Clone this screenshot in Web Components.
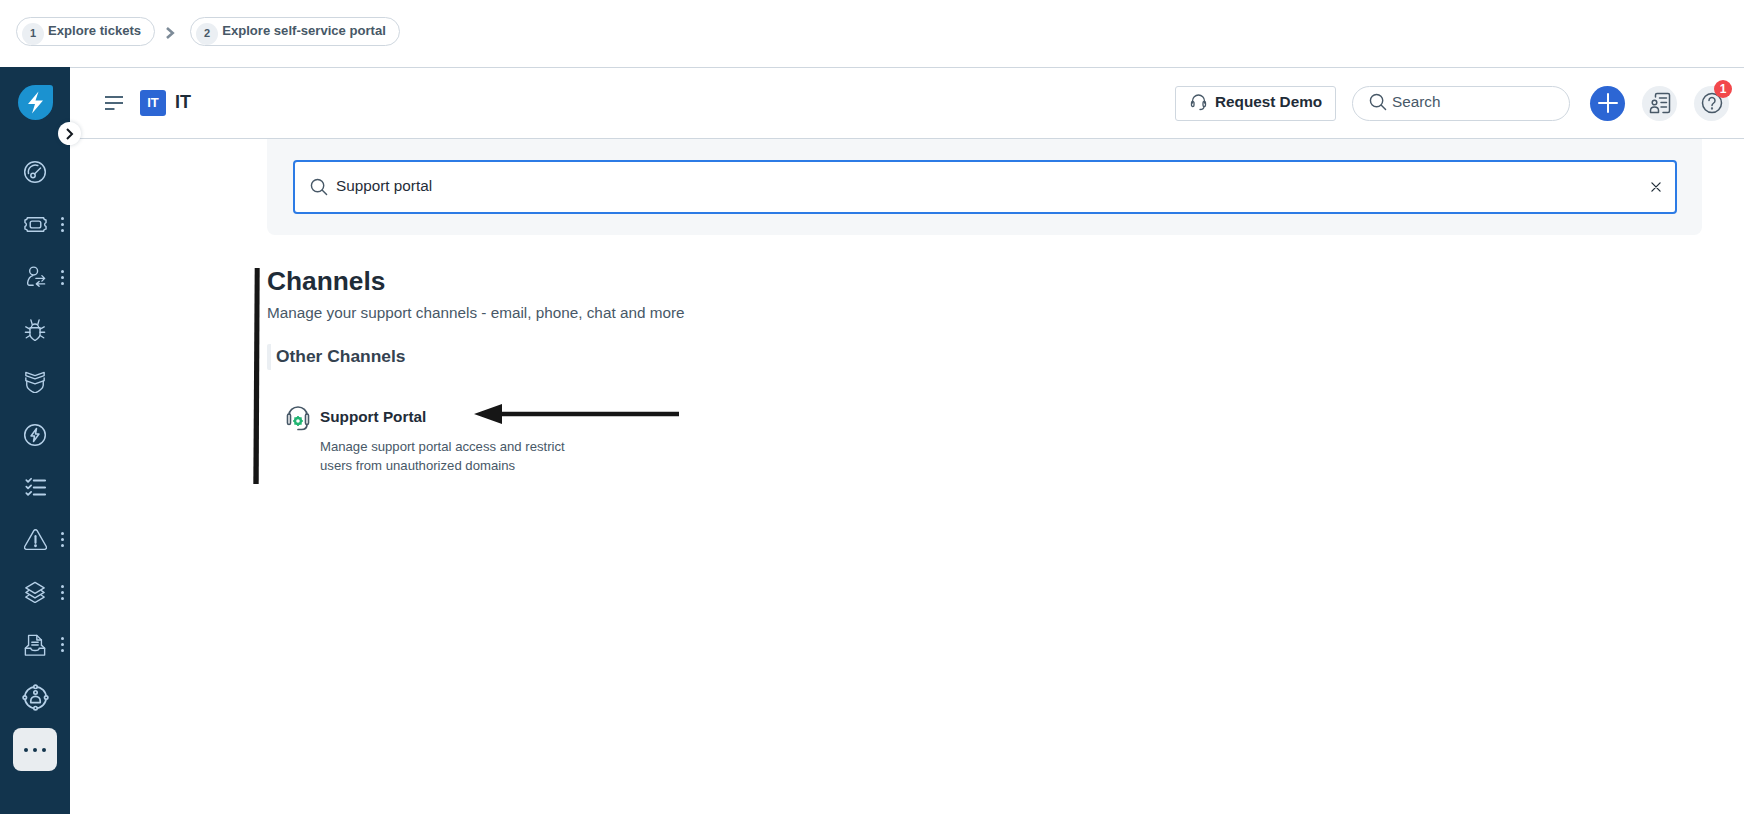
<!DOCTYPE html>
<html lang="en"><head><meta charset="utf-8"><title>IT</title>
<style>html,body{margin:0;height:100%;background:#fff;overflow:hidden;font-family:"Liberation Sans",Arial,sans-serif}</style></head>
<body>
<app-shell>
  <tour-steps slot="top">
    <tour-step n="1">Explore tickets</tour-step>
    <tour-step n="2">Explore self-service portal</tour-step>
  </tour-steps>
  <side-nav slot="side"></side-nav>
  <top-bar slot="bar"></top-bar>
  <search-panel slot="main">Support portal</search-panel>
  <channels-section slot="main"></channels-section>
</app-shell>
<script>
const def=(name,render)=>customElements.define(name,class extends HTMLElement{
  constructor(){super();this.attachShadow({mode:'open'});}
  connectedCallback(){this.shadowRoot.innerHTML=render(this);}
});
const F='"Liberation Sans",Arial,sans-serif';
const ICONS={
 gauge:[24,'<circle cx="12" cy="12" r="10.300"/><path d="M5.500 13.500a7 7 0 0 1 9.300-8"/><path d="M17.500 8 11.500 14"/><circle cx="10" cy="15.500" r="2.200"/>'],
 ticket:[23,'<path d="M3.500 5H20.500c0 1.200 1 2.200 2.500 2.200V10c-1 .3-1.500 1-1.500 2s.5 1.700 1.500 2v2.800c-1.500 0-2.500 1-2.500 2.200H3.500c0-1.200-1-2.200-2.500-2.200V14c1-.3 1.500-1 1.500-2s-.5-1.700-1.500-2V7.200C2.500 7.200 3.500 6.200 3.500 5z"/><rect x="6.500" y="8.500" width="11" height="7" rx="2"/>'],
 transfer:[22,'<circle cx="10.500" cy="5.500" r="4.300"/><path d="M9.500 10.500c-3 1-5 4.500-5.500 7.500-.2 2 .6 3 2 3h4"/><path d="M13 13.500h9.500M19.500 10.500l3 3-3 3"/><path d="M22.500 19.500h-9M16.500 16.800l-3 2.700 3 2.700"/>'],
 bug:[22,'<path d="M6.500 9.500h11v7.500c0 2.500-3 5-5.500 6.500-2.500-1.500-5.500-4-5.500-6.500z"/><path d="M8 9.500c0-2.200 1.800-4 4-4s4 1.800 4 4"/><path d="M7.500 1l1.500 5M16.500 1L15 6M6.500 11 2 8.500M6.500 14.500H1.500M6.500 18 2.500 20.500M17.500 11 22 8.500M17.500 14.500h5M17.500 18l4 2.500"/>'],
 shield:[22,'<path d="M2 1.500 12 5 22 1.500V5L12 8.500 2 5z"/><path d="M2 7.500v3L12 14l10-3.500v-3"/><path d="M3 11v4.500c0 3.500 5 7 9 8.500 4-1.500 9-5 9-8.500V11"/>'],
 bolt:[24,'<circle cx="12" cy="12" r="10.300"/><path d="M13.500 5.500 8 13h3.500l-1 5.500L16 11h-3.500z"/>'],
 list:[21,'<path d="M1.500 3.500 3.500 5.500 7 2M1.500 11l2 2L7 9.500M1.500 18.500l2 2L7 17" stroke-width="2"/><path d="M10 4h13M10 12h13M10 20h13" stroke-width="2.200"/>'],
 warn:[23,'<path d="M10.300 2.800a2 2 0 0 1 3.400 0l9.500 16.500a2 2 0 0 1-1.700 3H2.500a2 2 0 0 1-1.700-3z"/><path d="M12 8.500v7" stroke-width="2.200"/><circle cx="12" cy="18.500" r=".8" stroke-width="1.400"/>'],
 layers:[22,'<path d="M12 1.500 22 7.500l-10 6-10-6z"/><path d="M5 10.500 2 12.500l10 6 10-6-3-2"/><path d="M5 15.500 2 17.500l10 6 10-6-3-2"/>'],
 doc:[22,'<path d="M5 12.500V1.500h9L19 6.500v6"/><path d="M14 1.500v5h5M8.500 9h7M8.500 12h7"/><path d="M4.500 12.500 1.500 15.500v7.500h21v-7.500l-3-3"/><path d="M1.500 15.500h6c0 1.500 1.500 2.500 4.500 2.500s4.500-1 4.500-2.500h6"/>'],
 orbit:[27,'<circle cx="12" cy="12" r="9.500"/><circle cx="12" cy="2.500" r="1.500" fill="#12344d"/><circle cx="12" cy="21.500" r="1.500" fill="#12344d"/><circle cx="2.500" cy="12" r="1.500" fill="#12344d"/><circle cx="21.500" cy="12" r="1.500" fill="#12344d"/><circle cx="12" cy="7.500" r="1.500"/><path d="M7.800 16.500v-1.500c0-2.300 1.800-4 4.200-4s4.200 1.700 4.200 4v1.500z"/>']
};
const ROWS=[['gauge',0],['ticket',1],['transfer',1],['bug',0],['shield',0],['bolt',0],['list',0],['warn',1],['layers',1],['doc',1],['orbit',0]];

def('app-shell',()=>`<style>:host{display:flex;flex-direction:column;height:814px;width:1744px;overflow:hidden}
.row{display:flex;flex:1;min-height:0}.right{flex:1;display:flex;flex-direction:column;min-width:0}
.main{flex:1;padding:0 42px 0 197px}</style>
<slot name="top"></slot><div class="row"><slot name="side"></slot><div class="right"><slot name="bar"></slot><div class="main"><slot name="main"></slot></div></div></div>`);

def('tour-steps',()=>`<style>:host{display:flex;align-items:flex-start;height:67px;padding:17px 0 0 16px;box-sizing:border-box;background:#fff}</style><slot></slot>`);

def('tour-step',el=>{
 const n=el.getAttribute('n');
 const chev=n==='2'?`<svg class="chev" width="12" height="12" viewBox="0 0 12 12" fill="none"><path d="M2 1 7.700 6 2 11" stroke="#7d8b98" stroke-width="2.600"/></svg>`:'';
 return `<style>:host{display:flex;align-items:flex-start}
 .chev{margin:10px 13px 0 10px}
 .pill{display:flex;align-items:flex-start;height:29px;box-sizing:border-box;border:1px solid #cfd7df;border-radius:15px;padding:5px 13px 0 5px;gap:4px;font:700 13.100px/15px ${F};color:#475867;white-space:nowrap}
 .n{width:22px;height:22px;box-sizing:border-box;padding-bottom:2px;border-radius:50%;background:#ebeff3;display:flex;align-items:center;justify-content:center;font-size:11px}
 .t{margin-top:0}</style>${chev}<div class="pill"><span class="n">${n}</span><span class="t"><slot></slot></span></div>`;
});

def('nav-item',el=>{
 const more=el.hasAttribute('more');
 const [sz,body]=ICONS[el.getAttribute('icon')];
 return `<style>:host{display:block;position:relative;height:52.500px;flex:none}
 svg{position:absolute;left:${35-sz/2}px;top:${26-sz/2}px;width:${sz}px;height:${sz}px;fill:none;stroke:#b5d0e8;stroke-width:1.500;stroke-linecap:round;stroke-linejoin:round}
 .d{position:absolute;left:61px;top:18.500px;display:flex;flex-direction:column;gap:3px}
 .d i{display:block;width:3px;height:3px;border-radius:50%;background:#b5d0e8}</style>
 <svg viewBox="0 0 24 24">${body}</svg>${more?'<span class="d"><i></i><i></i><i></i></span>':''}`;
});

def('side-nav',()=>`<style>:host{display:flex;flex-direction:column;width:70px;flex:none;background:#12344d;position:relative;box-sizing:border-box;padding-top:79px}
.logo{position:absolute;left:18px;top:18px}
.toggle{position:absolute;left:58px;top:55px;width:23px;height:23px;border-radius:50%;background:#fff;box-shadow:0 0 4px rgba(18,52,77,.2);display:flex;align-items:center;justify-content:center;z-index:2}
.more{margin:4.500px 0 0 13px;width:44px;height:43px;border-radius:8px;background:#e9edf0;display:flex;align-items:center;justify-content:center;gap:5px}
.more i{width:4px;height:4px;border-radius:50%;background:#12344d}</style>
<svg class="logo" width="35" height="35" viewBox="0 0 35 35"><path d="M17.500 0H32a3 3 0 0 1 3 3v14.500A17.500 17.500 0 1 1 17.500 0z" fill="#1b92d0"/><path d="M20.500 6.500 10 19h7l-3 9.500L25 15.500h-7.500z" fill="#fff"/></svg>
<span class="toggle"><svg width="10" height="12" viewBox="0 0 10 12" fill="none"><path d="M2 1 7 6l-5 5" stroke="#12181f" stroke-width="2"/></svg></span>
${ROWS.map(([i,m])=>`<nav-item icon="${i}"${m?' more':''}></nav-item>`).join('')}
<div class="more"><i></i><i></i><i></i></div>`);

def('top-bar',()=>`<style>:host{display:flex;align-items:center;height:72px;box-sizing:border-box;border-top:1px solid #cfd7df;border-bottom:1px solid #cfd7df;background:#fff;padding:0 15px 0 35px;color:#12181f;font-family:${F}}
.ham{margin-right:17px}
.badge{width:26px;height:26px;border-radius:3px;background:#2c66d4;color:#fff;font:700 13px/26px ${F};text-align:center;margin-right:9px}
.t{font-weight:700;font-size:18px;color:#1f2c38;flex:1;padding-bottom:1px}
.demo{display:flex;align-items:center;gap:8px;box-sizing:border-box;width:161px;height:35px;border:1px solid #cfd7df;border-radius:3px;padding:0 0 2px 14px;font:700 15.300px ${F};color:#1f2c38;margin-right:16px}
.search{display:flex;align-items:center;gap:5px;box-sizing:border-box;width:218px;height:35px;border:1px solid #cfd7df;border-radius:18px;padding:0 0 2px 16px;font-size:15.300px;color:#475867;margin-right:20px}
.round{width:35px;height:35px;border-radius:50%;display:flex;align-items:center;justify-content:center;background:#ebeff3;position:relative;flex:none}
.plus{background:#2c66d4;margin-right:17px}.c{margin-right:17px}
.dot{position:absolute;right:-3px;top:-6px;width:18px;height:18px;border-radius:50%;background:#f2484b;color:#fff;font:700 12px/18px ${F};text-align:center}
svg{fill:none;stroke-linecap:round;stroke-linejoin:round;flex:none}</style>
<svg class="ham" width="18" height="14" viewBox="0 0 18 14" stroke="#12344d" stroke-width="1.400"><path d="M0 1h18M0 7h18M0 13h9"/></svg>
<span class="badge">IT</span><span class="t">IT</span>
<div class="demo"><svg width="17" height="17" viewBox="0 0 17 17" stroke="#475867" stroke-width="1.300"><path d="M2.500 9V7a6 6 0 0 1 12 0v2"/><rect x="1.500" y="7.500" width="2.500" height="5" rx="1.200"/><rect x="13" y="7.500" width="2.500" height="5" rx="1.200"/><path d="M14 12.500c0 2-1.500 3-4 3"/></svg>Request Demo</div>
<div class="search"><svg width="18" height="18" viewBox="0 0 19 19" stroke="#475867" stroke-width="1.500"><circle cx="8" cy="8" r="6.500"/><path d="M13 13l4.500 4.500"/></svg>Search</div>
<div class="round plus"><svg width="20" height="20" viewBox="0 0 20 20" stroke="#fff" stroke-width="2"><path d="M10 1v18M1 10h18"/></svg></div>
<div class="round c"><svg width="22" height="22" viewBox="0 0 22 22" stroke="#475867" stroke-width="1.500"><path d="M6.500 5V3a1.500 1.500 0 0 1 1.500-1.500H19A1.500 1.500 0 0 1 20.500 3v16a1.500 1.500 0 0 1-1.500 1.500H14"/><circle cx="5.500" cy="10.500" r="2.300"/><path d="M1.500 20.500v-2c0-2 1.700-3.500 4-3.500s4 1.500 4 3.500v2z"/><path d="M10.500 6h7M12 10.500h5.500M12 15h5.500"/></svg></div>
<div class="round"><svg width="22" height="22" viewBox="0 0 22 22" stroke="#475867" stroke-width="1.500"><circle cx="11" cy="11" r="9.500"/><path d="M8 8.500a3 3 0 1 1 4.700 2.500c-1 .7-1.700 1.300-1.700 2.500"/><circle cx="11" cy="16.500" r=".4"/></svg><span class="dot">1</span></div>`);

def('search-panel',()=>`<style>:host{display:block;background:#f5f7f9;height:96px;box-sizing:border-box;padding:21px 25px 0 26px;border-radius:0 0 8px 8px}
.box{display:flex;align-items:center;height:54px;box-sizing:border-box;border:2px solid #2c7be5;border-radius:4px;background:#fff;padding:0 14px 0 15px;gap:8px;font:15.300px ${F};color:#1f2c38}
.t{flex:1;padding-bottom:2px}svg{fill:none;stroke-linecap:round;flex:none}</style>
<div class="box"><svg width="18" height="18" viewBox="0 0 19 19" stroke="#475867" stroke-width="1.500"><circle cx="8" cy="8" r="6.500"/><path d="M13 13l4.500 4.500"/></svg><span class="t"><slot></slot></span>
<svg width="10" height="10" viewBox="0 0 11 11" stroke="#1f2c38" stroke-width="1.400"><path d="M1 1l9 9M10 1l-9 9"/></svg></div>`);

def('channels-section',()=>`<style>:host{display:block;position:relative;padding-top:30px;font-family:${F}}
h1{margin:0;font-size:26.300px;line-height:32px;font-weight:700;color:#1f2c38}
.sub{margin:6px 0 0;font-size:15.300px;line-height:20px;color:#475867}
h2{margin:21px 0 0;border-left:4px solid #ebeff3;border-radius:2px;padding-left:5px;height:26px;font-size:17.400px;line-height:24px;font-weight:700;color:#344250}
.item{display:flex;gap:10px;margin:35px 0 0 19px}
.ic{flex:none;margin-top:1px}
h3{margin:2.500px 0 0;font-size:15.300px;line-height:18px;font-weight:700;color:#1f2c38}
p{margin:11.500px 0 0;font-size:13.150px;line-height:19px;color:#475867}
.ann{position:absolute;left:-14px;top:33px;pointer-events:none;overflow:visible}</style>
<h1>Channels</h1>
<p class="sub">Manage your support channels - email, phone, chat and more</p>
<h2>Other Channels</h2>
<div class="item"><svg class="ic" width="24" height="26" viewBox="0 0 24 26" fill="none"><path d="M3 8V9a9 8 0 0 1 18 0v-1" stroke="#475867" stroke-width="1.700"/><rect x="1.500" y="8" width="3" height="10.500" rx="1.500" stroke="#475867" stroke-width="1.600"/><rect x="19.500" y="8" width="3" height="10.500" rx="1.500" stroke="#475867" stroke-width="1.600"/><path d="M21 18.500c0 3-2 5-5.500 5H12" stroke="#475867" stroke-width="1.700" stroke-linecap="round"/><circle cx="12" cy="15" r="3" fill="none" stroke="#22b573" stroke-width="2.400"/><path d="M12 10v1.500M12 18.500V20M7 15h1.500M15.500 15H17M8.500 11.500l1 1M14.500 17.500l1 1M8.500 18.500l1-1M14.500 12.500l1-1" stroke="#22b573" stroke-width="1.700"/></svg>
<div><h3>Support Portal</h3><p>Manage support portal access and restrict<br>users from unauthorized domains</p></div></div>
<svg class="ann" width="450" height="225" viewBox="0 0 450 225"><path d="M1.700 0H6.700L5.700 216H.3z" fill="#161616"/><path d="M221 146 249 136V143.800H426V148.200H249V156z" fill="#161616"/></svg>`);
</script>
</body></html>
